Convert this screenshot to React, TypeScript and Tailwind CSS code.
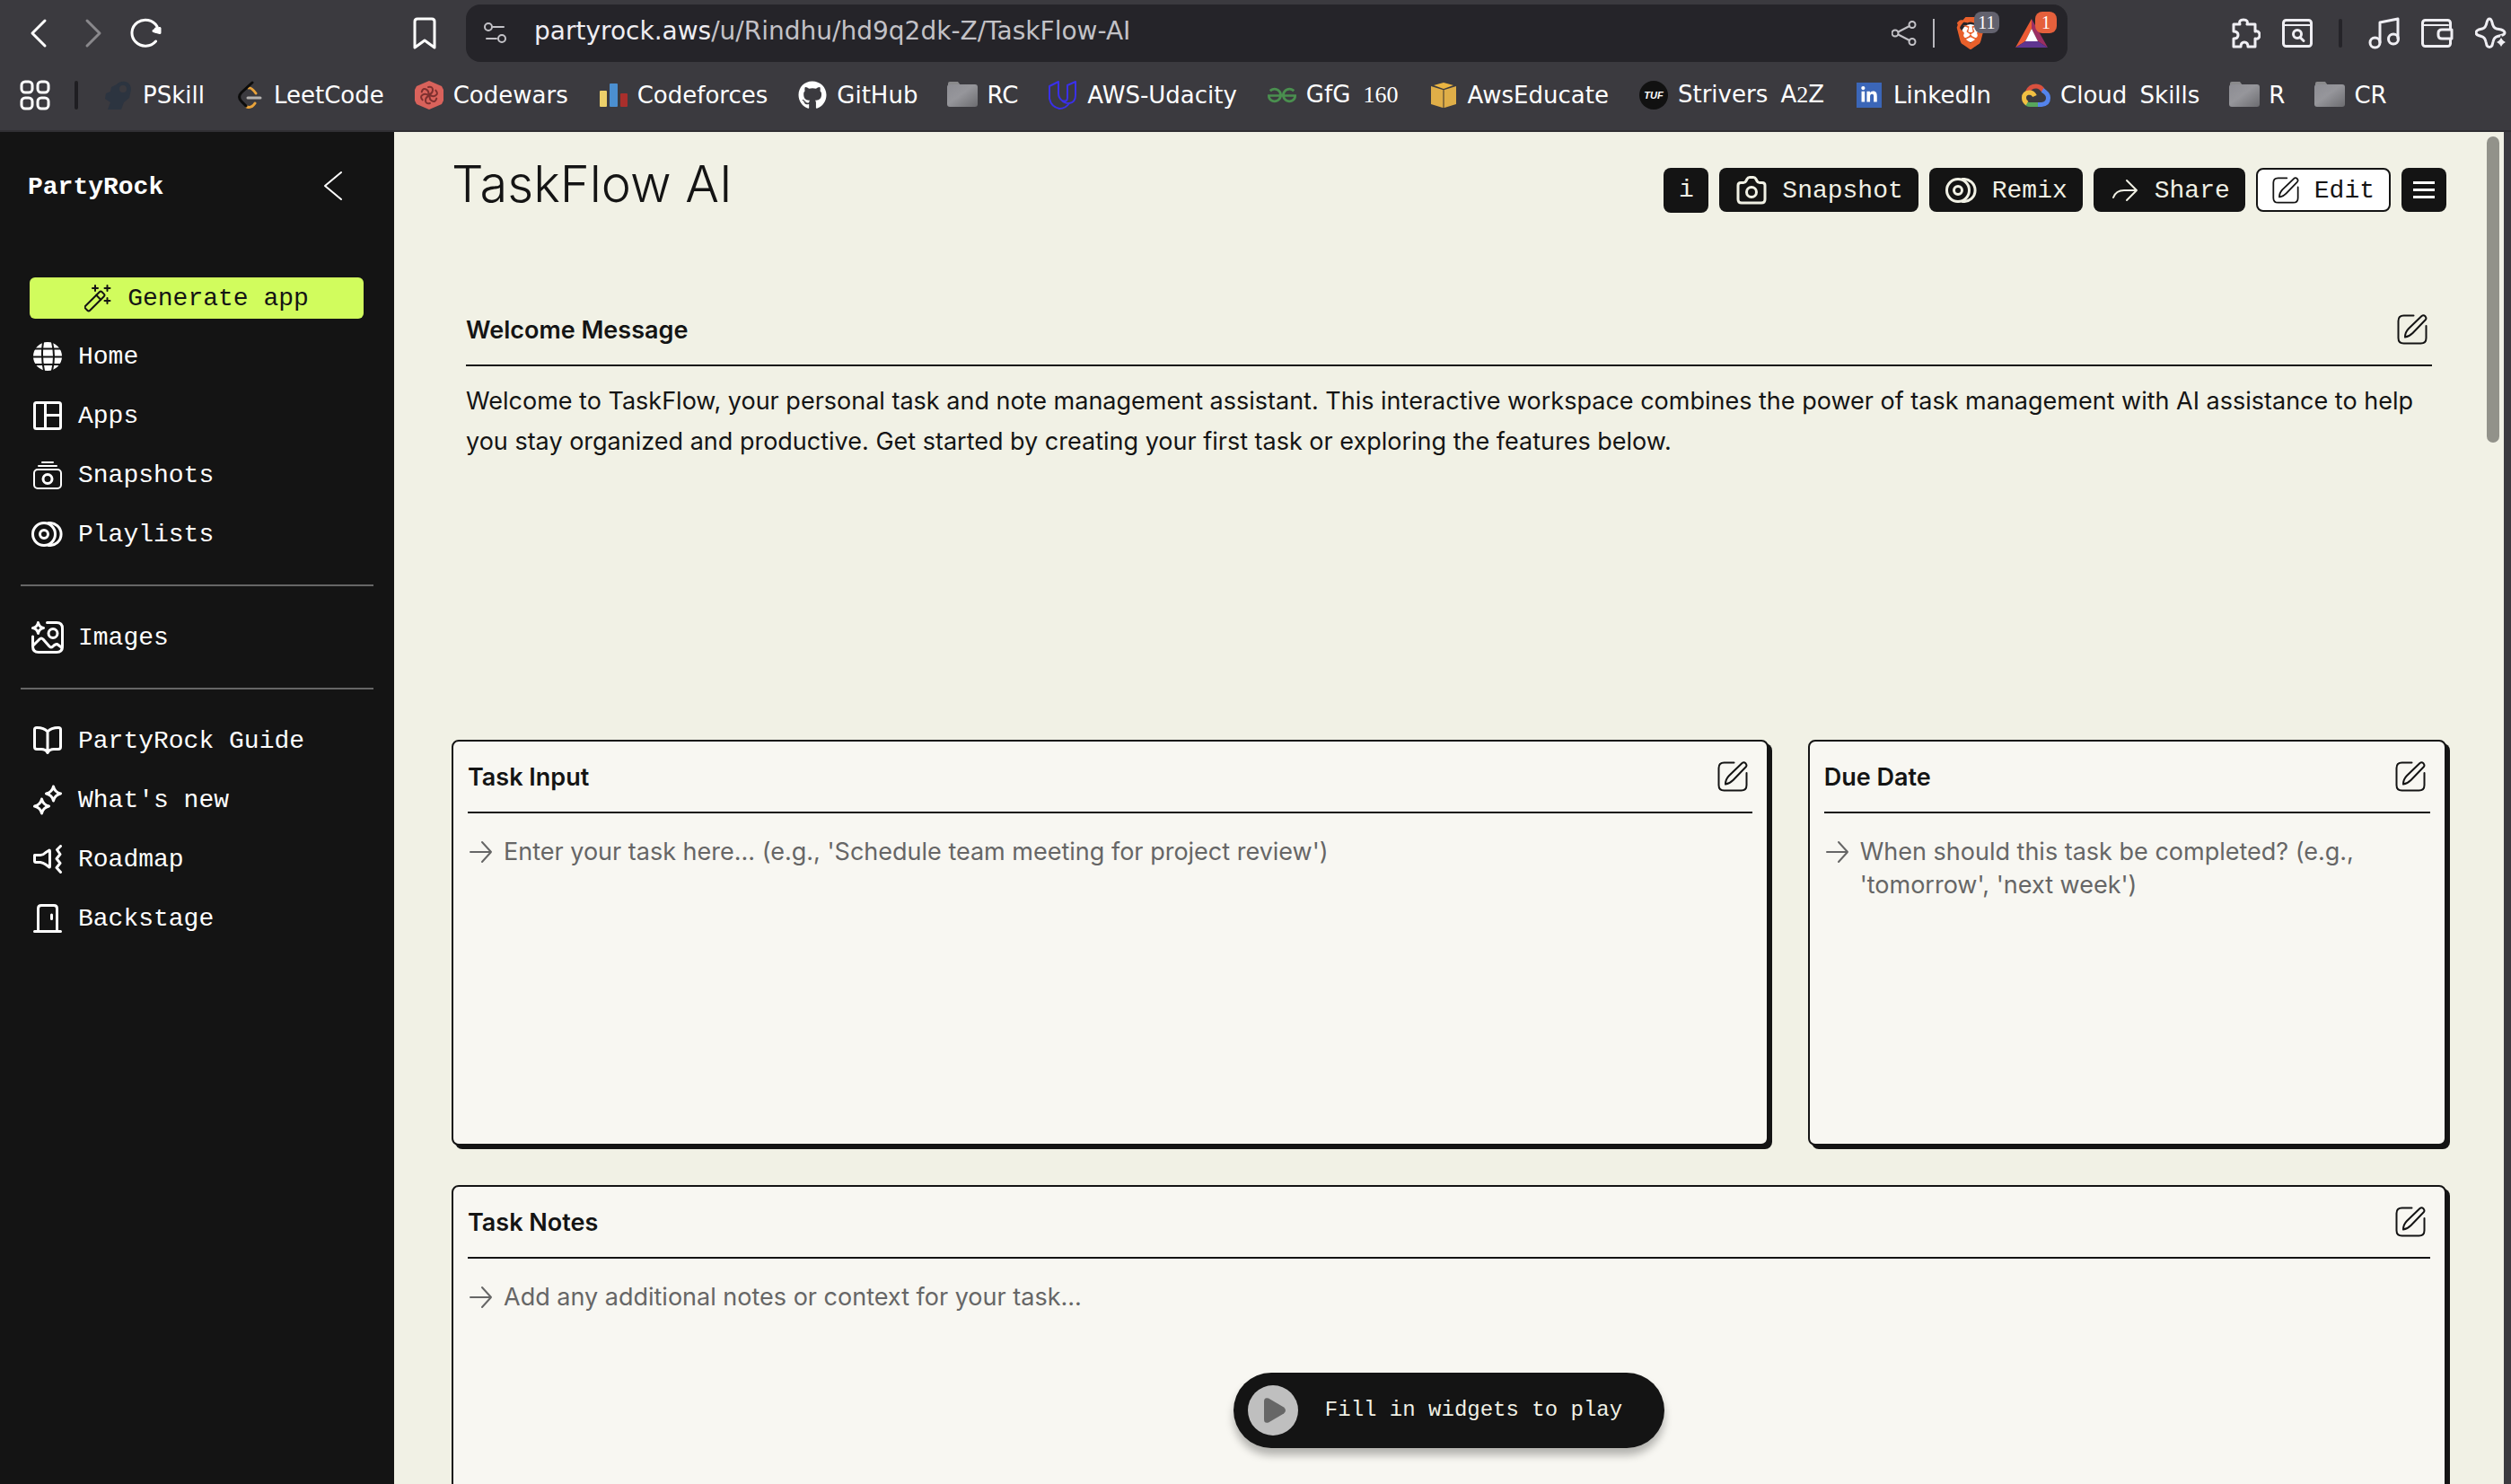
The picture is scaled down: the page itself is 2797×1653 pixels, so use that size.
import type { ReactNode } from "react";
import { FaGithub, FaLinkedinIn } from "react-icons/fa";
import { SiBrave, SiGeeksforgeeks } from "react-icons/si";

const UI = "font-['DejaVu_Sans',sans-serif]";
const MONO = "font-['Liberation_Mono',monospace]";

type SvgProps = { w: number; h: number; sw?: number; className?: string; children: ReactNode };

function Svg({ w, h, sw = 2, className = "", children }: SvgProps) {
  return (
    <svg width={w} height={h} viewBox={`0 0 ${w} ${h}`} fill="none" stroke="currentColor" strokeWidth={sw} strokeLinecap="round" strokeLinejoin="round" className={`shrink-0 ${className}`} aria-hidden="true">
      {children}
    </svg>
  );
}

/* Digits in the bookmark labels are set in a serif face. */
function ChromeText({ text }: { text: string }) {
  return (
    <>
      {text.split(/(\d+)/).map((part, i) =>
        /\d/.test(part) ? (
          <span key={i} className="font-['Liberation_Serif',serif]">{part}</span>
        ) : (
          part
        ),
      )}
    </>
  );
}

/* ---------- browser chrome ---------- */

const Folder = () => (
  <Svg w={34} h={30} sw={0}>
    <defs>
      <linearGradient id="folder" x1="0" y1="0" x2="1" y2="1">
        <stop offset="0" stopColor="#8d8d93" />
        <stop offset="0.45" stopColor="#96969b" />
        <stop offset="1" stopColor="#6c6c70" />
      </linearGradient>
    </defs>
    <path d="M1 6V2q0-2 2-2h9l3 4v2z" fill="#8a8a8c" />
    <rect x="0" y="3" width="34" height="25" rx="3" fill="url(#folder)" />
  </Svg>
);

const bookmarks: { label: string; icon: ReactNode }[] = [
  {
    label: "PSkill",
    icon: (
      <Svg w={32} h={32} sw={0}>
        <path d="M14 4q4-4 10-3 6 2 6 9l-2 9-6 5-3 8H4l3-8-6-4 1-6 5-2 1-5z" fill="#2c3440" />
        <circle cx="21" cy="9" r="4" fill="#3b3a3f" />
      </Svg>
    ),
  },
  {
    label: "LeetCode",
    icon: (
      <Svg w={28} h={32} sw={3}>
        <path d="M13 8q3-1 8 6M20 25q-4 6-9 4" stroke="#e9a33b" />
        <path d="M17 2L5 13q-5 5 0 10l5 5" stroke="#0c0c0c" />
        <path d="M12 19h14" stroke="#b3b1b0" />
      </Svg>
    ),
  },
  {
    label: "Codewars",
    icon: (
      <Svg w={32} h={32} sw={2}>
        <path d="M16 0l14 6 2 4v12l-2 4-14 6-14-6-2-4V10l2-4z" fill="#d9625b" stroke="none" />
        {[0, 60, 120, 180, 240, 300].map((a) => (
          <path key={a} d="M16 15q4-1 4-5t-5-3" stroke="#7e302f" transform={`rotate(${a} 16 16)`} />
        ))}
      </Svg>
    ),
  },
  {
    label: "Codeforces",
    icon: (
      <Svg w={32} h={28} sw={0}>
        <rect x="1" y="9" width="8" height="18" rx="1" fill="#edd06a" />
        <rect x="12" y="1" width="9" height="26" rx="1" fill="#4b8fd0" />
        <rect x="24" y="12" width="8" height="15" rx="1" fill="#a92f2c" />
      </Svg>
    ),
  },
  { label: "GitHub", icon: <FaGithub className="size-8 text-white" /> },
  { label: "RC", icon: <Folder /> },
  {
    label: "AWS-Udacity",
    icon: (
      <Svg w={32} h={32} sw={2}>
        <path d="M11 1L1 6v14q2 9 11 11 7 0 11-6-6 0-8-3-4-3-4-8zM21 6v13q0 5-6 3M21 5l9-4v15q0 8-7 9" stroke="#3a30e8" />
      </Svg>
    ),
  },
  { label: "GfG 160", icon: <SiGeeksforgeeks className="size-8 text-[#4a8f4f]" /> },
  {
    label: "AwsEducate",
    icon: (
      <Svg w={30} h={30} sw={0}>
        <path d="M1 5l13 4v20L1 25zM29 5L16 9v20l13-4z" fill="#dfae48" />
        <path d="M15 1l11 3-11 4L4 4z" fill="#eab542" />
        <path d="M14 9h2v20h-2z" fill="#8b6f3a" />
      </Svg>
    ),
  },
  {
    label: "Strivers A2Z",
    icon: (
      <span className="flex size-8 items-center justify-center rounded-full bg-[#111] font-['Liberation_Sans',sans-serif] text-[11px] font-bold text-white italic">
        TUF
      </span>
    ),
  },
  {
    label: "LinkedIn",
    icon: (
      <span className="flex size-7 items-center justify-center bg-[#3b66b8] text-white">
        <FaLinkedinIn className="size-5" />
      </span>
    ),
  },
  {
    label: "Cloud Skills",
    icon: (
      <Svg w={32} h={26} sw={5}>
        <path d="M6.500 9.500Q9 3 16 3q5 0 8 5" stroke="#d9513f" strokeLinecap="butt" />
        <path d="M23 7.500Q29.500 11 29.500 16 29.500 23 22 23.500h-5" stroke="#5484ec" strokeLinecap="butt" />
        <path d="M18 23.500H9q-3 0-4-2" stroke="#58a65c" strokeLinecap="butt" />
        <path d="M6 22q-3.500-2-3.500-6 0-5.500 6-6 4 0 6 4" stroke="#f1bf42" strokeLinecap="butt" />
      </Svg>
    ),
  },
  { label: "R", icon: <Folder /> },
  { label: "CR", icon: <Folder /> },
];

function BrowserChrome() {
  return (
    <header className={`shrink-0 border-b-2 border-[#302f33] bg-[#3b3a3f] text-white ${UI}`}>
      <div className="flex h-[74px] items-center pr-1">
        <div className="flex w-[519px] shrink-0 items-center pl-8">
          <button type="button" aria-label="Back">
            <Svg w={22} h={34} sw={3}><path d="M18 3L4 17l14 14" /></Svg>
          </button>
          <button type="button" aria-label="Forward" className="ml-10 text-[#89888c]">
            <Svg w={22} h={34} sw={3}><path d="M3 3l14 14L3 31" /></Svg>
          </button>
          <button type="button" aria-label="Reload" className="ml-[29px]">
            <Svg w={36} h={34} sw={3}>
              <path d="M28.500 26A15 14.500 0 1 1 30 9.500" />
              <circle cx="30" cy="13.500" r="3.500" fill="currentColor" stroke="none" />
              <path d="M26 14.500l7-3v5z" fill="currentColor" />
            </Svg>
          </button>
          <button type="button" aria-label="Bookmark this page" className="mr-[33px] ml-auto">
            <Svg w={26} h={36} sw={3}><path d="M2 5q0-3 3-3h16q3 0 3 3v29l-11-8-11 8z" /></Svg>
          </button>
        </div>
        <div className="flex h-16 min-w-0 flex-1 items-center rounded-2xl bg-[#252429] pr-3 pl-5 text-[#c3c2c7]">
          <Svg w={26} h={24} sw={2}>
            <circle cx="5" cy="5" r="4" /><path d="M10 5h12M3 18h11" /><circle cx="20" cy="18" r="4" />
          </Svg>
          <div className="ml-[30px] flex min-w-0 flex-1 pb-1 text-[28px] leading-9">
            <label htmlFor="address" className="text-[#eeedf2]">partyrock.aws</label>
            <input id="address" type="text" defaultValue="/u/Rindhu/hd9q2dk-Z/TaskFlow-AI" className="min-w-0 flex-1 bg-transparent focus:outline-none" />
          </div>
          <button type="button" aria-label="Share page">
            <Svg w={28} h={28} sw={2}>
              <circle cx="4" cy="14" r="3.500" /><circle cx="23" cy="4.500" r="3.500" /><circle cx="23" cy="23.500" r="3.500" />
              <path d="M7.500 12.500L20 6M7.500 15.500L20 22" />
            </Svg>
          </button>
          <span className="mr-6 ml-[18px] h-8 w-0.5 bg-[#b9b8bd]" />
          <button type="button" aria-label="Brave Shields, 11 blocked" className="relative mr-[34px] flex h-9 w-8 items-center justify-center">
            <span className="absolute top-2 left-1.5 h-5 w-5 rounded-full bg-white" />
            <SiBrave className="absolute size-9 text-[#e9602b]" />
            <span className="absolute -top-1.5 left-5 flex h-6 w-7 items-center justify-center rounded-lg bg-[#63626e] font-['Liberation_Serif',serif] text-[20px] text-white">11</span>
          </button>
          <button type="button" aria-label="Brave Rewards, 1 new" className="relative mr-2.5 flex h-9 w-9 items-center justify-center">
            <Svg w={36} h={32} sw={0}>
              <path d="M18 0L0 32l11-7 7-14z" fill="#ec5b34" />
              <path d="M18 0l18 32-11-7-7-14z" fill="#9b2f62" />
              <path d="M0 32h36l-11-7H11z" fill="#5f3590" />
              <path d="M18 11l7 14H11z" fill="#fff" />
            </Svg>
            <span className="absolute -top-1.5 left-5.5 flex size-6 items-center justify-center rounded-lg bg-[#e5603c] font-['Liberation_Serif',serif] text-[20px] text-white">1</span>
          </button>
        </div>
        <div className="ml-[181px] flex shrink-0 items-center text-[#efeef3]">
          <button type="button" aria-label="Extensions">
            <Svg w={34} h={34} sw={3}>
              <path d="M4 7h7c-1-3 0-5 4-5s5 2 4 5h9v8c3-1 5 1 5 4s-2 5-5 4v9h-8c0-3-1-5-4-5s-4 2-4 5H4v-9c3 0 5-1 5-4s-2-4-5-4z" />
            </Svg>
          </button>
          <button type="button" aria-label="Find on page" className="ml-6">
            <Svg w={34} h={32} sw={3}>
              <rect x="1.500" y="1.500" width="31" height="29" rx="3" /><path d="M2 7h30" strokeWidth="2" />
              <circle cx="17" cy="17" r="4.500" /><path d="M20 20.500l4 4" />
            </Svg>
          </button>
          <span className="mx-[29px] h-8 w-1 rounded bg-[#252429]" />
          <button type="button" aria-label="Media">
            <Svg w={36} h={36} sw={3}>
              <circle cx="7.500" cy="28.500" r="5.500" /><circle cx="28" cy="24.500" r="5.500" /><path d="M13 28V6l20-4v22" />
            </Svg>
          </button>
          <button type="button" aria-label="Wallet" className="ml-[23px]">
            <Svg w={36} h={32} sw={3}>
              <rect x="1.500" y="1.500" width="31" height="29" rx="3" /><path d="M2 7h28" strokeWidth="2" />
              <path d="M34 12H23q-4 0-4 4v2q0 4 4 4h11z" fill="#3b3a3f" />
            </Svg>
          </button>
          <button type="button" aria-label="Leo AI" className="ml-6">
            <Svg w={36} h={36} sw={3}>
              <path d="M16 2q2 0 3 4 1 6 5 7l5 1q4 1.500 4 3.500t-4 3l-4 1q-4 1-5 6l-1 4q-1 2-3 2t-3-2l-1-4q-1-5-5-6l-3-1q-3-1-3-3t3-3.500l4-1q4-1 5-7 1-4 3-4z" />
              <path d="M29 21q1 6 7 7-6 1-7 7-1-6-7-7 6-1 7-7z" fill="currentColor" stroke="#3b3a3f" strokeWidth="1" />
            </Svg>
          </button>
        </div>
      </div>
      <nav aria-label="Bookmarks" className="flex h-[71px] items-center pb-2 pl-[22px]">
        <button type="button" aria-label="All apps">
          <Svg w={34} h={34} sw={3}>
            <rect x="2" y="2" width="12" height="12" rx="4" /><rect x="20" y="2" width="12" height="12" rx="4" />
            <rect x="2" y="20" width="12" height="12" rx="4" /><rect x="20" y="20" width="12" height="12" rx="4" />
          </Svg>
        </button>
        <span className="mr-7 ml-[27px] h-8 w-1 shrink-0 rounded bg-[#1f1e22]" />
        <ul className="flex items-center gap-[33px]">
          {bookmarks.map((b) => (
            <li key={b.label}>
              <a href="#" className="flex items-center gap-2.5 text-[26px] leading-8 whitespace-nowrap">
                <span className="flex w-[34px] shrink-0 items-center justify-center">{b.icon}</span>
                <span>
                  {b.label.split(" ").map((word, i) => (
                    <span key={word} className={i > 0 ? "ml-1.5" : ""}>
                      {i > 0 && " "}
                      <ChromeText text={word} />
                    </span>
                  ))}
                </span>
              </a>
            </li>
          ))}
        </ul>
      </nav>
    </header>
  );
}

/* ---------- sidebar ---------- */

const Discs = ({ sw = 3 }: { sw?: number }) => (
  <Svg w={36} h={28} sw={sw}>
    <circle cx="14" cy="14" r="12.500" /><circle cx="14" cy="14" r="4.500" />
    <path d="M19 1.600A12.500 12.500 0 1 1 19 26.400" />
  </Svg>
);

const mainLinks: { label: string; icon: ReactNode }[] = [
  {
    label: "Home",
    icon: (
      <Svg w={32} h={32} sw={2}>
        <circle cx="16" cy="16" r="16" fill="currentColor" stroke="none" />
        <path d="M0 7.500h32M0 16.500h32M0 25h32M11 0Q8.500 16 12 32M21 0Q25 16 21 32" stroke="#141414" />
      </Svg>
    ),
  },
  {
    label: "Apps",
    icon: (
      <Svg w={32} h={32} sw={3}>
        <rect x="1.500" y="1.500" width="29" height="29" rx="2" /><path d="M13.500 2v28M14 15.500h16" />
      </Svg>
    ),
  },
  {
    label: "Snapshots",
    icon: (
      <Svg w={34} h={32} sw={2}>
        <path d="M11 2h12M7 6h20" /><rect x="2" y="10" width="30" height="21" rx="4" />
        <circle cx="17" cy="20.500" r="5" strokeWidth="3" />
      </Svg>
    ),
  },
  { label: "Playlists", icon: <Discs /> },
];

const imageLinks: { label: string; icon: ReactNode }[] = [
  {
    label: "Images",
    icon: (
      <Svg w={36} h={36} sw={3}>
        <path d="M7.500 1.500Q8.500 6.500 13.500 7.500 8.500 8.500 7.500 13.500 6.500 8.500 1.500 7.500 6.500 6.500 7.500 1.500z" />
        <path d="M17.500 1.500H28q6.500 0 6.500 6.500v20q0 6.500-6.500 6.500H8q-6.500 0-6.500-6.500V17" />
        <circle cx="24" cy="13.500" r="5" />
        <path d="M2 27l7-7q2-2 4 0l7 8q2 2 4 0l1-1q3-2.500 5-.5l4 3" />
      </Svg>
    ),
  },
];

const moreLinks: { label: string; icon: ReactNode }[] = [
  {
    label: "PartyRock Guide",
    icon: (
      <Svg w={32} h={32} sw={3}>
        <path d="M16 6Q12 1.500 4 1.500q-2.500 0-2.500 2V23q0 2.500 2.500 2.500h5q5 0 7 4 2-4 7-4h5q2.500 0 2.500-2.500V3.500q0-2-2.500-2-8 0-12 4.500zM16 6v22" />
      </Svg>
    ),
  },
  {
    label: "What's new",
    icon: (
      <Svg w={32} h={34} sw={3}>
        <path d="M22.500 2Q24 8.500 30.500 10 24 11.500 22.500 18 21 11.500 14.500 10 21 8.500 22.500 2z" />
        <path d="M9.500 16Q11 22.500 17.500 24 11 25.500 9.500 32 8 25.500 1.500 24 8 22.500 9.500 16z" />
      </Svg>
    ),
  },
  {
    label: "Roadmap",
    icon: (
      <Svg w={32} h={32} sw={3}>
        <path d="M1.500 11.500H8q3 0 6-3l4-2.500q.5 0 .5 1v17q0 1-.5 1l-4-3q-3-2-6-2.500H3q-1.500 0-1.500-1.500z" />
        <path d="M30.500 1.500l-4 4 3.500 5-4 5 4 5-4 5 4.500 5" />
      </Svg>
    ),
  },
  {
    label: "Backstage",
    icon: (
      <Svg w={32} h={32} sw={3}>
        <path d="M5.500 30V5q0-3.500 3.500-3.500h14Q26.500 1.500 26.500 5v25M1.500 30.500h29M20.500 12v4.500" />
      </Svg>
    ),
  },
];

function LinkList({ links }: { links: { label: string; icon: ReactNode }[] }) {
  return (
    <ul className="pl-[35px]">
      {links.map((l) => (
        <li key={l.label}>
          <a href="#" className="flex h-[66px] items-center gap-4">
            <span className="flex w-9 justify-center">{l.icon}</span>
            <span className="pt-0.5">{l.label}</span>
          </a>
        </li>
      ))}
    </ul>
  );
}

function Sidebar() {
  return (
    <aside className={`w-[439px] shrink-0 bg-[#141414] text-[28px] leading-9 text-white ${MONO}`}>
      <div className="flex h-[162px] items-start justify-between pt-[42px] pr-14 pl-[31px]">
        <a href="#" className="pt-0.5 font-bold">PartyRock</a>
        <button type="button" aria-label="Collapse sidebar">
          <Svg w={24} h={36} sw={2}><path d="M21 3L3 18l18 15" /></Svg>
        </button>
      </div>
      <div className="pr-[34px] pl-[33px]">
        <button type="button" className="flex h-[46px] w-full items-center justify-center gap-[18px] rounded-md bg-[#d1fc5d] text-[#141414]">
          <Svg w={30} h={32} sw={2}>
            <g transform="translate(11.500 19.500) rotate(-45)">
              <rect x="-13" y="-3.500" width="26" height="7" rx="2" /><path d="M6-3.500v7" />
            </g>
            <path d="M12 2v6M9 5h6M25.500 2v6M22.500 5h6M25.500 16v6M22.500 19h6" />
          </Svg>
          <span className="pt-0.5">Generate app</span>
        </button>
      </div>
      <nav aria-label="PartyRock" className="pt-[9px]">
        <LinkList links={mainLinks} />
        <hr className="mx-[23px] mt-[23px] mb-6 border-t-2 border-[#666]" />
        <LinkList links={imageLinks} />
        <hr className="mx-[23px] mt-[23px] mb-6 border-t-2 border-[#666]" />
        <LinkList links={moreLinks} />
      </nav>
    </aside>
  );
}

/* ---------- app page ---------- */

function PencilSquare({ size, sw }: { size: number; sw: number }) {
  return (
    <svg width={size} height={size} viewBox="0 0 34 34" fill="none" stroke="currentColor" strokeWidth={sw} strokeLinecap="round" strokeLinejoin="round" className="shrink-0" aria-hidden="true">
      <path d="M18.500 1.500H7.500q-6 0-6 6v19q0 6 6 6h19q6 0 6-6V13" />
      <path d="M9 25.500c0-4 1.500-7 4-9.500L27.500 2q2-1.500 4 .3 1.800 2 .2 4L17.500 21c-2.500 2.500-5 4-8.500 4.500z" />
    </svg>
  );
}

const BTN = "flex h-[49px] items-center gap-4 rounded-lg bg-[#141414] pr-[17px] pl-[18px]";

function Toolbar() {
  return (
    <div className={`flex gap-3 text-[28px] leading-9 text-[#f1f1e5] ${MONO}`}>
      <button type="button" aria-label="App information" className="flex size-[50px] items-center justify-center rounded-lg bg-[#141414]">i</button>
      <button type="button" className={BTN}>
        <span className="flex w-9 justify-center">
          <Svg w={34} h={32} sw={3}>
            <path d="M2 10.500q0-3 3-3h3q2 0 3-2l1-2q1-2 3-2h4q2 0 3 2l1 2q1 2 3 2h3q3 0 3 3V26q0 4-4 4H6q-4 0-4-4z" />
            <circle cx="17" cy="18" r="5.500" />
          </Svg>
        </span>
        <span className="pt-0.5">Snapshot</span>
      </button>
      <button type="button" className={BTN}>
        <Discs />
        <span className="pt-0.5">Remix</span>
      </button>
      <button type="button" className={BTN}>
        <span className="flex w-[34px] justify-center">
          <Svg w={30} h={26} sw={2}><path d="M2 21Q5 13 14 13h14M17 2l11 11-11 11" /></Svg>
        </span>
        <span className="pt-0.5">Share</span>
      </button>
      <button type="button" className="flex h-[49px] items-center gap-[17px] rounded-lg border-2 border-[#141414] bg-white px-4 text-[#141414]">
        <PencilSquare size={30} sw={2} />
        <span className="pt-0.5">Edit</span>
      </button>
      <button type="button" aria-label="Menu" className="flex h-[49px] w-[50px] items-center justify-center rounded-lg bg-[#141414] text-white">
        <span className="flex w-6 flex-col gap-[5px]">
          <span className="h-[3px] bg-white" /><span className="h-[3px] bg-white" /><span className="h-[3px] bg-white" />
        </span>
      </button>
    </div>
  );
}

function WidgetHeader({ title, id }: { title: string; id?: string }) {
  return (
    <div className="flex h-20 shrink-0 items-center justify-between border-b-2 border-[#141414] pr-[5px]">
      <h2 className="pt-0.5 text-[27px] leading-9 font-semibold">{id ? <label htmlFor={id}>{title}</label> : title}</h2>
      <button type="button" aria-label={`Edit ${title}`}><PencilSquare size={34} sw={2} /></button>
    </div>
  );
}

function InputWidget({ id, title, placeholder, className }: { id: string; title: string; placeholder: string; className: string }) {
  return (
    <section className={`flex flex-col rounded-lg border-2 border-[#141414] bg-[#f8f7f2] px-4 shadow-[4px_4px_0_#141414] ${className}`}>
      <WidgetHeader title={title} id={id} />
      <div className="flex flex-1 gap-3 pt-6 pb-4 pl-0.5 text-[#666]">
        <Svg w={26} h={38} sw={2}><path d="M1 19h23M14 8l10 11-10 11" /></Svg>
        <textarea
          id={id}
          placeholder={placeholder}
          className="min-w-0 flex-1 resize-none bg-transparent text-[27px] leading-[37px] placeholder:text-[#666] placeholder:opacity-100 focus:outline-none"
        />
      </div>
    </section>
  );
}

export default function App() {
  return (
    <div className="flex h-screen flex-col overflow-hidden bg-[#3b3a3f]">
      <BrowserChrome />
      <div className="flex min-h-0 flex-1 pr-2">
        <Sidebar />
        <main className="relative min-w-0 flex-1 overflow-hidden bg-[#f1f1e5] px-16 font-[Inter,sans-serif] text-[#141414]">
          <div className="flex h-[181px] items-start justify-between pt-10">
            <h1 className="-mt-4 text-[56px] leading-[68px] font-light">TaskFlow AI</h1>
            <Toolbar />
          </div>
          <div className="grid auto-rows-[452px] grid-cols-3 gap-11">
            <section className="col-span-3 px-4">
              <WidgetHeader title="Welcome Message" />
              <p className="pt-4 text-[27px] leading-[45px]">
                Welcome to TaskFlow, your personal task and note management assistant. This interactive workspace combines the power of task management with AI assistance to help you stay organized and productive. Get started by creating your first task or exploring the features below.
              </p>
            </section>
            <InputWidget id="task" title="Task Input" placeholder="Enter your task here... (e.g., 'Schedule team meeting for project review')" className="col-span-2" />
            <InputWidget id="due" title="Due Date" placeholder="When should this task be completed? (e.g., 'tomorrow', 'next week')" className="" />
            <InputWidget id="notes" title="Task Notes" placeholder="Add any additional notes or context for your task..." className="col-span-3" />
          </div>
          <div className="pointer-events-none absolute inset-x-0 bottom-10 flex justify-center">
            <button type="button" className={`pointer-events-auto flex h-[84px] items-center gap-[30px] rounded-full bg-[#141414] pr-[47px] pl-4 text-2xl text-[#f1f1e5] shadow-[0_8px_10px_rgba(0,0,0,0.28)] ${MONO}`}>
              <span className="flex size-14 items-center justify-center rounded-full bg-[#bfbfbf]">
                <svg width="26" height="28" viewBox="0 0 26 28" className="ml-1 fill-[#666]" aria-hidden="true">
                  <path d="M1 4q0-5 5-3.500l17 10q4 3.500 0 7l-17 10Q1 29 1 24z" />
                </svg>
              </span>
              Fill in widgets to play
            </button>
          </div>
          <div className="absolute top-[5px] right-[5px] h-[341px] w-3.5 rounded-full bg-[#92928a]" />
        </main>
      </div>
    </div>
  );
}
